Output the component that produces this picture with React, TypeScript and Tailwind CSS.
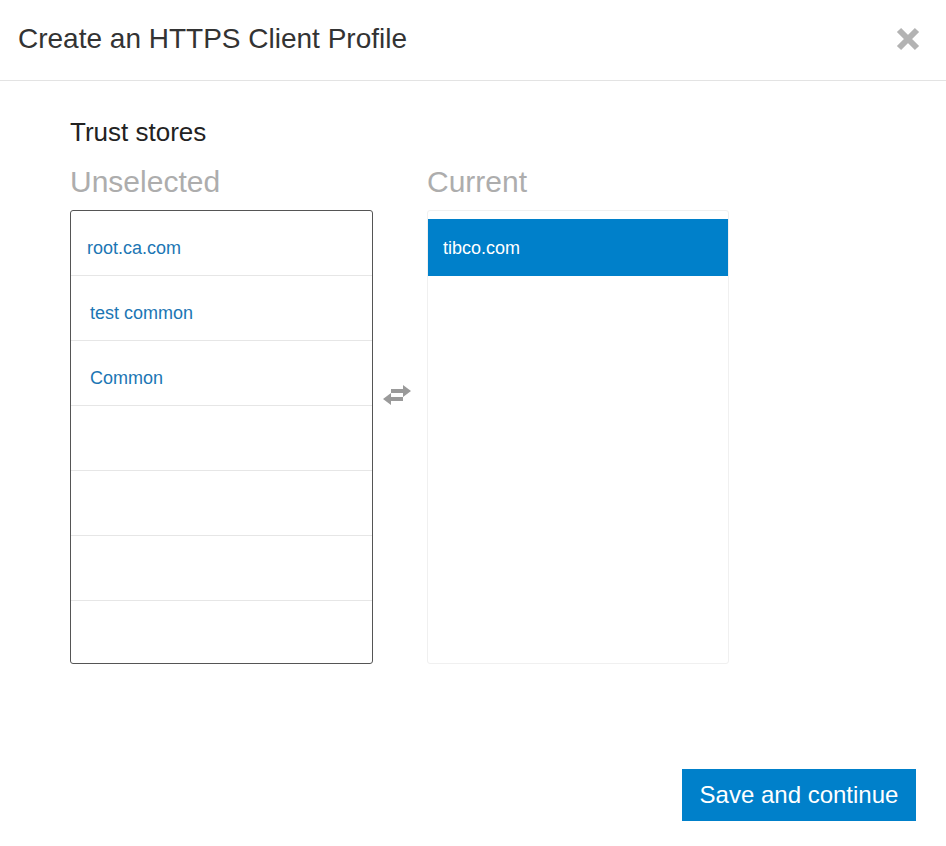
import React from 'react'

const unselected = ['root.ca.com', 'test common', 'Common', '', '', '']

function SwapIcon() {
  return (
    <svg width="32" height="22" viewBox="0 0 32 22" fill="#9a9a9a">
      <path d="M10 5h12V1l8 6-8 6V9H10z" />
      <path d="M22 13H10V9l-8 6 8 6v-4h12z" />
    </svg>
  )
}

function CloseIcon() {
  return (
    <svg width="26" height="26" viewBox="0 0 26 26">
      <path d="M4 4L22 22M22 4L4 22" stroke="#b3b3b3" strokeWidth="6" strokeLinecap="butt" />
    </svg>
  )
}

export default function App() {
  return (
    <div className="flex min-h-screen flex-col bg-white font-['Liberation_Sans',Arial,sans-serif]">
      {/* Header */}
      <div className="flex h-[81px] items-center justify-between border-b border-[#e3e3e3] pl-[18px] pr-[25px]">
        <h1 className="text-[28px] text-[#333] pb-[2px]">Create an HTTPS Client Profile</h1>
        <button className="mb-[3px]">
          <CloseIcon />
        </button>
      </div>

      {/* Body */}
      <div className="flex-1 pl-[70px] pt-[35px]">
        <h2 className="text-[26px] leading-[32px] text-[#222]">Trust stores</h2>
        <div className="mt-[13px] flex">
          <div className="w-[303px]">
            <div className="text-[30px] leading-[42px] text-[#adadad] pb-[7px]">Unselected</div>
            <div className="h-[454px] rounded-[3px] border border-[#555] overflow-hidden">
              {unselected.map((name, i) => (
                <div
                  key={i}
                  className={`flex h-[65px] items-center border-b border-[#e6e6e6] pt-[10px] text-[18px] text-[#1c76b4] ${
                    i === 0 ? 'pl-[16px]' : 'pl-[19px]'
                  }`}
                >
                  {name}
                </div>
              ))}
            </div>
          </div>

          <div className="flex w-[54px] justify-center pt-[223px] pr-[6px]">
            <SwapIcon />
          </div>

          <div className="w-[302px]">
            <div className="text-[30px] leading-[42px] text-[#adadad] pb-[7px]">Current</div>
            <div className="h-[454px] rounded-[3px] border border-[#f0f0f0] pt-[8px]">
              <div className="flex h-[57px] items-center bg-[#0080ca] pl-[15px] pt-[1px] text-[18px] text-white">
                tibco.com
              </div>
            </div>
          </div>
        </div>
      </div>

      {/* Footer */}
      <div className="flex justify-end pb-[25px] pr-[30px]">
        <button className="h-[52px] w-[234px] bg-[#0080ca] text-[24px] text-white">
          Save and continue
        </button>
      </div>
    </div>
  )
}
